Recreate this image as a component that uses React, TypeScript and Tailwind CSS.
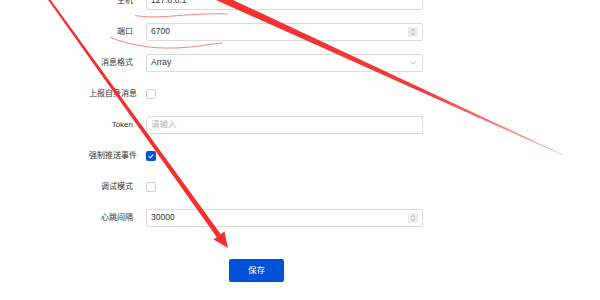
import React from "react";

const font = "font-['Liberation_Sans','Noto_Sans_CJK_SC',sans-serif]";

function Label({ text }: { text: string }) {
  return (
    <div className={`ml-[89px] w-[44px] shrink-0 text-right text-[8px] leading-none text-[#333] whitespace-nowrap`}>
      {text}
    </div>
  );
}

function Spinner() {
  return (
    <div className="flex h-[10px] w-[10px] flex-col items-center justify-center rounded-[1px] bg-[#ececec]">
      <svg width="6" height="8" viewBox="0 0 6 8" fill="none" stroke="#9a9a9a" strokeWidth="0.8">
        <path d="M1.2 3 L3 1.3 L4.8 3" />
        <path d="M1.2 5 L3 6.7 L4.8 5" />
      </svg>
    </div>
  );
}

function TextInput({ value, placeholder, spinner, select }: { value?: string; placeholder?: string; spinner?: boolean; select?: boolean }) {
  return (
    <div className="ml-[13px] flex h-[18px] w-[277px] items-center rounded-[2px] border border-[#dcdcdc] bg-white pl-[4px] pr-[4px]">
      <span className={`flex-1 text-[8.5px] leading-none ${value ? "text-[#333]" : "text-[#b5b5b5]"}`}>{value ?? placeholder}</span>
      {spinner && <Spinner />}
      {select && (
        <svg width="8" height="6" viewBox="0 0 8 6" fill="none" stroke="#a0a0a0" strokeWidth="0.8" className="mr-[1px]">
          <path d="M1.5 1.8 L4 4.2 L6.5 1.8" />
        </svg>
      )}
    </div>
  );
}

function Checkbox({ checked }: { checked?: boolean }) {
  return (
    <div className="ml-[13px] flex h-[10px] w-[10px] items-center justify-center">
      {checked ? (
        <div className="flex h-[10px] w-[10px] items-center justify-center rounded-[2px] bg-[#0052d9]">
          <svg width="8" height="8" viewBox="0 0 8 8" fill="none" stroke="white" strokeWidth="1.1">
            <path d="M1.6 4.2 L3.3 5.8 L6.4 2.4" />
          </svg>
        </div>
      ) : (
        <div className="h-[10px] w-[10px] rounded-[2px] border border-[#cfcfcf] bg-white" />
      )}
    </div>
  );
}

function Row({ children }: { children: React.ReactNode }) {
  return <div className="flex h-[31px] items-center">{children}</div>;
}

export default function App() {
  return (
    <div className={`relative h-[300px] w-[600px] overflow-hidden bg-white ${font}`}>
      <div className="mt-[-15px] flex flex-col">
        <Row>
          <Label text="主机" />
          <TextInput value="127.0.0.1" />
        </Row>
        <Row>
          <Label text="端口" />
          <TextInput value="6700" spinner />
        </Row>
        <Row>
          <Label text="消息格式" />
          <TextInput value="Array" select />
        </Row>
        <Row>
          <Label text="上报自身消息" />
          <Checkbox />
        </Row>
        <Row>
          <Label text="Token" />
          <TextInput placeholder="请输入" />
        </Row>
        <Row>
          <Label text="强制推送事件" />
          <Checkbox checked />
        </Row>
        <Row>
          <Label text="调试模式" />
          <Checkbox />
        </Row>
        <Row>
          <Label text="心跳间隔" />
          <TextInput value="30000" spinner />
        </Row>
        <div className="mt-[26px] ml-[229px] flex h-[23px] w-[55px] items-center justify-center rounded-[2px] bg-[#0052d9] text-[8.5px] text-white">
          保存
        </div>
      </div>

      <svg className="pointer-events-none absolute left-0 top-0" width="600" height="300" viewBox="0 0 600 300">
        <defs>
          <linearGradient id="fade" x1="218" y1="0" x2="563" y2="155" gradientUnits="userSpaceOnUse">
            <stop offset="0" stopColor="#f23030" stopOpacity="1" />
            <stop offset="0.6" stopColor="#f23030" stopOpacity="0.95" />
            <stop offset="1" stopColor="#f23030" stopOpacity="0.35" />
          </linearGradient>
        </defs>
        <polygon points="216.5,0.3 219.5,-6.3 563.17,154.64 562.83,155.36" fill="url(#fade)" />
        <polygon points="48.8,-2.6 47.2,-1.4 217,237.5 221,234.5" fill="#f23030" />
        <polygon points="224.5,231.5 213.5,239.5 228,248" fill="#f23030" />
        <path d="M135,15.5 C145,17 155,17.5 170,16.2 S215,13 228,14" stroke="#f26b6b" strokeWidth="1" fill="none" strokeOpacity="0.85" />
        <path d="M110,37 C125,44 150,49 175,48 S215,43 223,43" stroke="#f26b6b" strokeWidth="1" fill="none" strokeOpacity="0.85" />
      </svg>
    </div>
  );
}
